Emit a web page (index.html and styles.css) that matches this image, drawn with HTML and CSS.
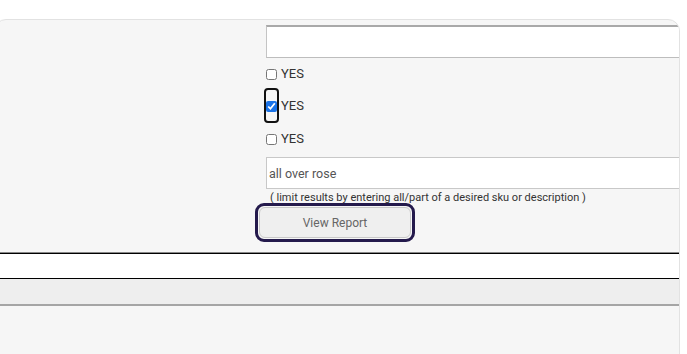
FILE: index.html
```html
<!DOCTYPE html>
<html lang="en">
<head>
    <meta charset="UTF-8">
    <meta name="viewport" content="width=device-width, initial-scale=1.0">
    <title>Inventory Report</title>
    <link rel="stylesheet" href="styles.css">
</head>
<body>
    <div class="card">
        <div class="form-row">
            <div class="label-col"></div>
            <div class="field-col">
                <input class="text-input top-input" type="text">

                <label class="check-row">
                    <input type="checkbox"> YES
                </label>
                <label class="check-row check-focus">
                    <span class="focus-ring"><input type="checkbox" checked></span>YES
                </label>
                <label class="check-row">
                    <input type="checkbox"> YES
                </label>

                <input class="text-input search-input" type="text" value="all over rose">
                <div class="hint">( limit results by entering all/part of a desired sku or description )</div>

                <div class="btn-ring">
                    <button class="btn">View Report</button>
                </div>
            </div>
        </div>

        <div class="band band-white"></div>
        <div class="band band-grey"></div>
        <div class="band-rest"></div>
    </div>
</body>
</html>
```

FILE: styles.css
```css
* {
    box-sizing: border-box;
}
body {
    margin: 0;
    background: #fff;
    font-family: Roboto, "Liberation Sans", Arial, sans-serif;
    color: #333;
    overflow: hidden;
}
.card {
    margin: 19px 0 0 -6px;
    width: 686px;
    height: 360px;
    background: #f6f6f6;
    border: 1px solid #e2e2e2;
    border-radius: 12px;
    overflow: hidden;
}
.form-row {
    display: flex;
    height: 232px;
}
.label-col {
    width: 271px;
    flex-shrink: 0;
}
.field-col {
    flex: 1;
    display: flex;
    flex-direction: column;
    padding-top: 5px;
    min-width: 0;
}
.text-input {
    display: block;
    width: 420px;
    background: #fff;
    border: 1px solid #bdbdbd;
    font-family: Roboto, "Liberation Sans", Arial, sans-serif;
    font-size: 12.5px;
    color: #555;
    padding: 0 2px;
    outline: none;
}
.top-input {
    height: 33px;
    flex-shrink: 0;
    border-top: 2px solid #a9a9a9;
    border-left-color: #c4c4c4;
    border-right: none;
}
.search-input {
    height: 32px;
    flex-shrink: 0;
    border-color: #c8c8c8;
}
.check-row {
    display: flex;
    align-items: center;
    font-size: 13px;
    color: #333;
    height: 13px;
    flex-shrink: 0;
}
.check-row:first-of-type {
    margin-top: 9px;
}
.check-row input {
    width: 11px;
    height: 11px;
    margin: 1px 4px 0 0;
    accent-color: #1a73e8;
}
.check-focus {
    height: 35px;
    margin: 8px 0 9px -2px;
}
.focus-ring {
    display: flex;
    align-items: center;
    height: 35px;
    width: 15px;
    border: 2px solid #111;
    border-radius: 4px;
    margin-right: 2px;
}
.focus-ring input {
    margin: 2px 0 0 0;
}
.check-row + .search-input {
    margin-top: 12px;
}
.hint {
    font-size: 11px;
    color: #333;
    margin: 3px 0 0 4px;
    line-height: 12px;
    white-space: nowrap;
}
.btn-ring {
    width: 160px;
    height: 39px;
    flex-shrink: 0;
    margin: -1px 0 0 -11px;
    border: 3px solid #241a4c;
    border-radius: 9px;
    padding: 1px;
}
.btn {
    width: 100%;
    height: 100%;
    background: #efefef;
    border: 1px solid #c9c9c9;
    border-radius: 6px;
    font-family: Roboto, "Liberation Sans", Arial, sans-serif;
    font-size: 12px;
    color: #666;
}
.band {
    height: 27px;
}
.band-white {
    background: #fff;
    border-top: 1px solid #888;
    box-shadow: inset 0 1px 0 #000;
    border-bottom: 1px solid #000;
}
.band-grey {
    background: #eee;
    border-bottom: 2px solid #a5a5a5;
}
```
